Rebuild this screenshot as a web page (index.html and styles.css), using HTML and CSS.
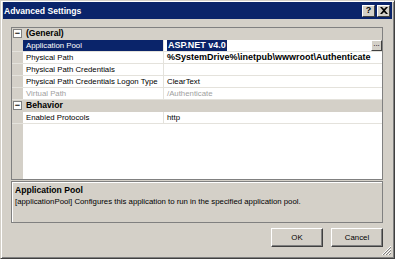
FILE: index.html
```html
<!DOCTYPE html>
<html lang="en">
  <head>
    <meta charset="UTF-8" />
    <title>Advanced Settings</title>
    <link rel="stylesheet" href="styles.css">
  </head>
  <body>
    <div class="window">
      <div class="titlebar">
        <span class="title">Advanced Settings</span>
        <div class="caption-buttons">
          <button class="cap-btn">?</button>
          <button class="cap-btn">
            <svg width="8" height="7" viewBox="0 0 8 7">
              <path d="M0 0h2l2 2 2-2h2L5 3.5 8 7H6L4 5 2 7H0l3-3.5z" fill="#000" />
            </svg>
          </button>
        </div>
      </div>

      <div class="content">
        <div class="grid">
          <div class="row category">
            <span class="gutter"><span class="toggle">&minus;</span></span>
            <span class="cat-name">(General)</span>
          </div>
          <div class="row selected">
            <span class="gutter"></span>
            <span class="name">Application Pool</span>
            <span class="value bold"><span class="sel-text">ASP.NET v4.0</span><span class="ellipsis">...</span></span>
          </div>
          <div class="row">
            <span class="gutter"></span>
            <span class="name">Physical Path</span>
            <span class="value bold">%SystemDrive%\inetpub\wwwroot\Authenticate</span>
          </div>
          <div class="row">
            <span class="gutter"></span>
            <span class="name">Physical Path Credentials</span>
            <span class="value"></span>
          </div>
          <div class="row">
            <span class="gutter"></span>
            <span class="name">Physical Path Credentials Logon Type</span>
            <span class="value">ClearText</span>
          </div>
          <div class="row disabled">
            <span class="gutter"></span>
            <span class="name">Virtual Path</span>
            <span class="value">/Authenticate</span>
          </div>
          <div class="row category">
            <span class="gutter"><span class="toggle">&minus;</span></span>
            <span class="cat-name">Behavior</span>
          </div>
          <div class="row">
            <span class="gutter"></span>
            <span class="name">Enabled Protocols</span>
            <span class="value">http</span>
          </div>
          <div class="grid-fill">
            <span class="gutter"></span>
          </div>
        </div>

        <div class="description">
          <p class="desc-title">Application Pool</p>
          <p>[applicationPool] Configures this application to run in the specified application pool.</p>
        </div>

        <div class="footer">
          <button class="push">OK</button>
          <button class="push">Cancel</button>
        </div>
      </div>
      <svg class="grip" width="11" height="11" viewBox="0 0 11 11">
        <path d="M10 1L1 10M10 4L4 10M10 7L7 10" stroke="#fff" stroke-width="1" />
        <path d="M10 2L2 10M10 5L5 10M10 8L8 10" stroke="#808080" stroke-width="1" />
      </svg>
    </div>
  </body>
</html>
```

FILE: styles.css
```css
* {
  margin: 0;
  padding: 0;
  box-sizing: border-box;
}

body {
  font-family: "Liberation Sans", Arial, sans-serif;
  font-size: 7.8px;
  color: #000;
  background-color: #d4d0c8;
  width: 395px;
  height: 259px;
  overflow: hidden;
}

.window {
  position: relative;
  width: 395px;
  height: 259px;
  border: 1px solid #404040;
  border-top-color: #d4d0c8;
  border-left-color: #d4d0c8;
  box-shadow: inset 1px 1px 0 #fff, inset -1px -1px 0 #808080;
  padding: 1px 2px 2px 2px;
  display: flex;
  flex-direction: column;
}

.titlebar {
  height: 17px;
  background-color: #0a246a;
  display: flex;
  align-items: center;
  justify-content: space-between;
  padding: 0 2px 0 1px;
}

.title {
  color: #fff;
  font-weight: bold;
  font-size: 8.6px;
}

.caption-buttons {
  display: flex;
  gap: 2px;
}

.cap-btn {
  width: 13px;
  height: 12px;
  background-color: #d4d0c8;
  border: 1px solid #404040;
  border-top-color: #fff;
  border-left-color: #fff;
  font-family: "Liberation Sans", Arial, sans-serif;
  font-weight: bold;
  font-size: 9px;
  line-height: 9px;
  display: flex;
  align-items: center;
  justify-content: center;
}

.content {
  flex: 1;
  display: flex;
  flex-direction: column;
  padding: 8px 9px 0 8px;
}

.grid {
  height: 153px;
  background-color: #fff;
  border: 1px solid #808080;
  display: flex;
  flex-direction: column;
}

.row {
  height: 12px;
  display: flex;
  align-items: stretch;
  line-height: 11px;
  border-bottom: 1px solid #e4e2dc;
}

.gutter {
  width: 11px;
  flex-shrink: 0;
  background-color: #d4d0c8;
  display: flex;
  align-items: center;
  justify-content: center;
}

.toggle {
  width: 9px;
  height: 9px;
  border: 1px solid #808080;
  background-color: #fff;
  font-size: 9px;
  line-height: 6px;
  text-align: center;
  font-weight: bold;
}

.category {
  background-color: #d4d0c8;
  border-bottom-color: #d4d0c8;
}

.cat-name {
  font-weight: bold;
  font-size: 8.6px;
  padding-left: 3px;
}

.name {
  width: 141px;
  flex-shrink: 0;
  padding-left: 3px;
  border-right: 1px solid #e4e2dc;
  white-space: nowrap;
  overflow: hidden;
}

.value {
  flex: 1;
  padding-left: 3px;
  display: flex;
  white-space: nowrap;
}

.bold {
  font-weight: bold;
  font-size: 9px;
}

.selected .name {
  background-color: #0a246a;
  color: #fff;
}

.sel-text {
  background-color: #0a246a;
  color: #fff;
  padding: 0 1px;
}

.ellipsis {
  margin-left: auto;
  width: 11px;
  background-color: #d4d0c8;
  border: 1px solid #404040;
  border-top-color: #fff;
  border-left-color: #fff;
  font-size: 8px;
  line-height: 6px;
  text-align: center;
  font-weight: normal;
  color: #000;
}

.disabled {
  color: #a0a0a0;
}

.grid-fill {
  flex: 1;
  display: flex;
}

.description {
  margin-top: 1px;
  height: 42px;
  border: 1px solid #808080;
  box-shadow: inset 1px 1px 0 #fff;
  padding: 3px 3px;
  line-height: 11px;
}

.desc-title {
  font-weight: bold;
  font-size: 8.6px;
}

.footer {
  display: flex;
  justify-content: flex-end;
  gap: 8px;
  padding-top: 5px;
}

.push {
  width: 52px;
  height: 19px;
  background-color: #d4d0c8;
  border: 1px solid #404040;
  border-top-color: #fff;
  border-left-color: #fff;
  box-shadow: inset -1px -1px 0 #808080;
  font-family: "Liberation Sans", Arial, sans-serif;
  font-size: 7.8px;
  color: #000;
}

.grip {
  position: absolute;
  right: 2px;
  bottom: 2px;
}
```
